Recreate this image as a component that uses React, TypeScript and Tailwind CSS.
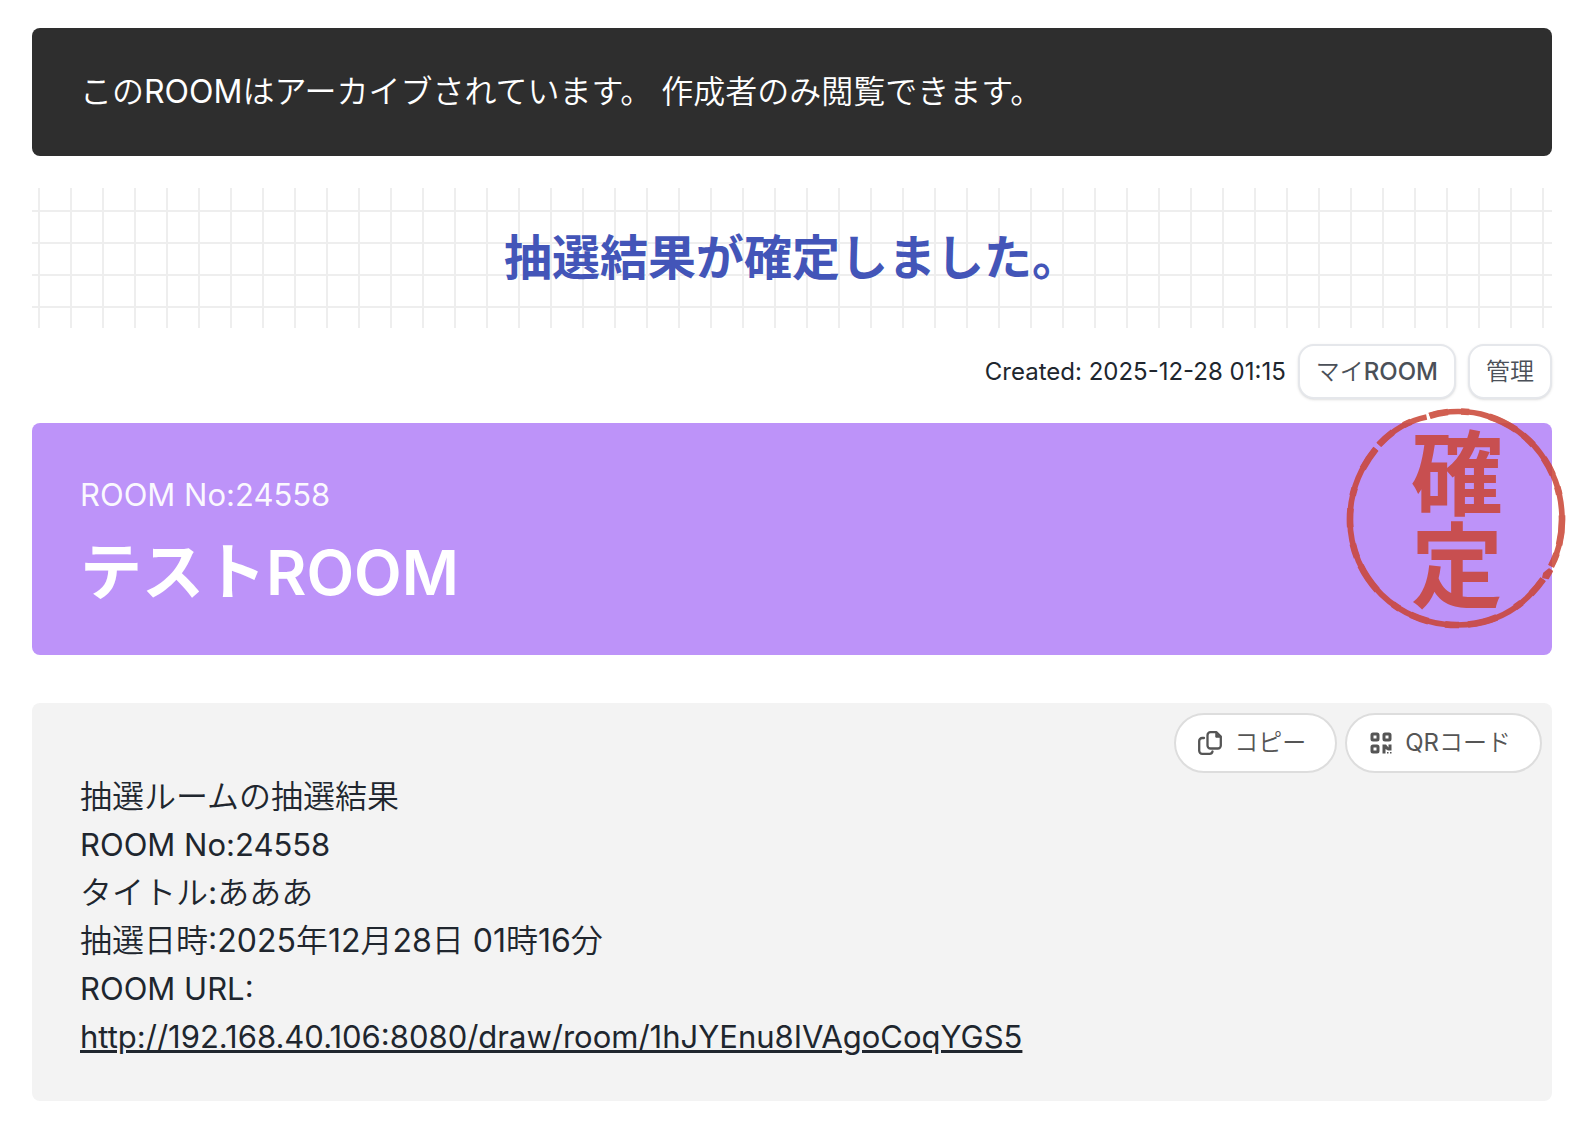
import type { ReactNode } from 'react';

const DETAILS = [
  { text: '抽選ルームの抽選結果', className: 'text-[32px]' },
  { text: 'ROOM No:24558', className: 'text-[31px]' },
  { text: 'タイトル:あああ', className: 'text-[32px]' },
  { text: '抽選日時:2025年12月28日 01時16分', className: 'text-[32px]' },
  { text: 'ROOM URL:', className: 'text-[31px]' },
];

const ROOM_URL = 'http://192.168.40.106:8080/draw/room/1hJYEnu8IVAgoCoqYGS5';

function CopyIcon() {
  return (
    <svg viewBox="0 0 24 24" className="w-6 h-6" fill="none" stroke="currentColor" strokeWidth="2.3" strokeLinejoin="round" strokeLinecap="round" aria-hidden="true">
      <path d="M12.500 1.200H18.500L22.800 5.500V14.500a3 3 0 0 1-3 3H12.500a3 3 0 0 1-3-3V4.200a3 3 0 0 1 3-3Z" />
      <path d="M17.800 1.500V6.200H22.500Z" fill="currentColor" strokeWidth="1" />
      <path d="M6 7H4.200a3 3 0 0 0-3 3V19.800a3 3 0 0 0 3 3H11.500a3 3 0 0 0 3-2.300" />
    </svg>
  );
}

function QrIcon() {
  return (
    <svg viewBox="0 0 24 24" className="w-6 h-6" fill="none" stroke="currentColor" strokeWidth="3" aria-hidden="true">
      <rect x="3" y="3" width="6" height="6" rx="1" />
      <rect x="15" y="3" width="6" height="6" rx="1" />
      <rect x="3" y="15" width="6" height="6" rx="1" />
      <path d="M13.500 13.500H17L19.500 16.500V13.500H22.500V19.500H19L16.500 18V22.500H13.500Z" fill="currentColor" stroke="none" />
      <path d="M18 21h1.500v1.500H18zM21 21h1.500v1.500H21z" fill="currentColor" stroke="none" />
    </svg>
  );
}

// 確定スタンプ
function Stamp() {
  return (
    <div className="absolute -right-[15px] -top-[15px] flex items-center justify-center size-[221px] text-[#ca4433] opacity-85">
      <svg viewBox="0 0 222 222" className="absolute inset-0 size-full" fill="none" stroke="currentColor" aria-hidden="true">
        <g strokeWidth="5.700">
          <path d="M84 8C100 2 125 2 142 8C185 21 217 62 217 112C217 130 213 146 206 159" />
          <path d="M198 172C176 203 146 218 111 218C53 218 4 172 4 112C4 86 13 62 30 41" />
          <path d="M33 37C46 23 61 13 81 9" />
        </g>
        {/* インクのにじみ */}
        <g strokeWidth="6.700" strokeDasharray="19 13 8 21 30 9 14 17">
          <path d="M84 8C100 2 125 2 142 8C185 21 217 62 217 112C217 130 213 146 206 159" />
          <path d="M198 172C176 203 146 218 111 218C53 218 4 172 4 112C4 86 13 62 30 41" />
          <path d="M33 37C46 23 61 13 81 9" />
        </g>
        <path d="M204 162L207 164L203 171L198 170L199 166Z" fill="currentColor" strokeWidth="2" strokeLinejoin="round" />
      </svg>
      <span className="[writing-mode:vertical-rl] font-['Noto_Sans_CJK_JP',sans-serif] text-[92px] leading-none font-bold">確定</span>
    </div>
  );
}

function OutlineButton({ children }: { children: ReactNode }) {
  return (
    <button type="button" className="h-[55px] px-4 rounded-2xl border-2 border-[#e5e7eb] bg-white text-2xl text-[#4b5058] shadow-sm">
      {children}
    </button>
  );
}

function PillButton({ icon, children }: { icon: ReactNode; children: ReactNode }) {
  return (
    <button type="button" className="flex items-center gap-3 h-15 pl-[22px] pr-[29px] rounded-full border-2 border-[#dddddd] bg-white font-['Inter','Noto_Sans_CJK_JP_DemiLight','Noto_Sans_CJK_JP',sans-serif] text-2xl text-[#555555]">
      {icon}
      <span>{children}</span>
    </button>
  );
}

export default function App() {
  return (
    <main className="pl-8 pr-[38px] pt-7 pb-6 bg-white font-['Inter','Noto_Sans_CJK_JP',sans-serif] text-[#20262e]" lang="ja">
      <div className="flex items-center h-32 px-12 rounded-lg bg-[#2e2e2e] text-white font-['Inter','Noto_Sans_CJK_JP_DemiLight','Noto_Sans_CJK_JP',sans-serif] text-[32px] leading-12">
        <p>このROOMはアーカイブされています。 作成者のみ閲覧できます。</p>
      </div>

      <div className="mt-8 py-[34px] bg-[linear-gradient(#eeeeee_2px,transparent_2px),linear-gradient(90deg,#eeeeee_2px,transparent_2px)] bg-[length:32px_32px] bg-[position:6px_22px] text-center">
        <h1 className="text-5xl leading-18 font-bold text-[#4355b8]">抽選結果が確定しました。</h1>
      </div>

      <div className="flex items-center justify-end gap-3 mt-4">
        <span className="text-2xl">Created: 2025-12-28 01:15</span>
        <OutlineButton>
          <span className="font-[350]">マイ</span>
          <span className="font-medium">ROOM</span>
        </OutlineButton>
        <OutlineButton>
          <span className="font-[350]">管理</span>
        </OutlineButton>
      </div>

      {/* ルームのタイトル */}
      <section className="relative mt-6 px-12 pt-12 pb-[38px] rounded-lg bg-[#bd93f9] text-white">
        <p className="text-[31px] leading-12 text-white/95">ROOM No:24558</p>
        <h2 className="mt-[10px] text-[62px] leading-22 font-semibold">テストROOM</h2>
        <Stamp />
      </section>

      {/* 抽選結果の詳細 */}
      <section className="mt-12 rounded-lg bg-[#f3f3f3]">
        <div className="flex justify-end gap-2 px-[10px] pt-[10px]">
          <PillButton icon={<CopyIcon />}>コピー</PillButton>
          <PillButton icon={<QrIcon />}>QRコード</PillButton>
        </div>
        <div className="px-12 pb-10 font-['Inter','Noto_Sans_CJK_JP_DemiLight','Noto_Sans_CJK_JP',sans-serif]">
          {DETAILS.map((line) => (
            <p key={line.text} className={line.className + ' leading-12'}>{line.text}</p>
          ))}
          <p className="text-[31px] leading-12">
            <a href={ROOM_URL} className="underline decoration-[3px] break-all">{ROOM_URL}</a>
          </p>
        </div>
      </section>
    </main>
  );
}
